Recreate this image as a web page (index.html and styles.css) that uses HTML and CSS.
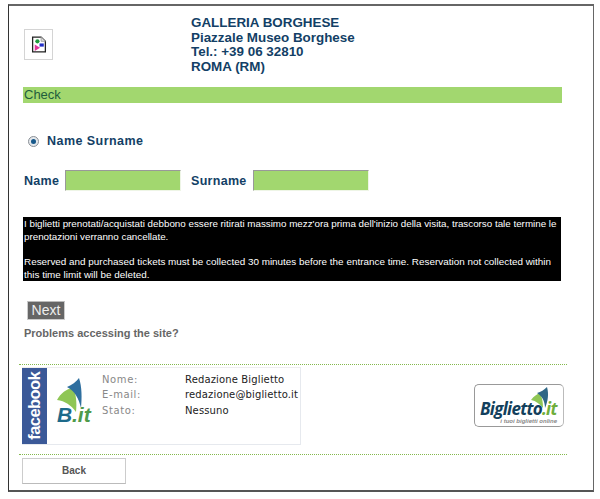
FILE: index.html
```html
<!DOCTYPE html>
<html lang="it">
<head>
<meta charset="utf-8">
<title>Galleria Borghese</title>
<link rel="stylesheet" href="styles.css">
</head>
<body>
<div class="frame">
  <header class="head">
    <div class="thumb">
      <svg width="16" height="17" viewBox="0 0 14 16">
        <path d="M1 1h8l4 4v10H1z" fill="#fff" stroke="#222" stroke-width="1.2"/>
        <path d="M9 1v4h4" fill="#ddd" stroke="#999" stroke-width=".8"/>
        <circle cx="5.5" cy="5" r="2" fill="#1f9a3c"/>
        <path d="M3 8l5 3-5 3z" fill="#e0359b"/>
        <path d="M7.500 7h4v3h-4z" fill="#2430c8"/>
      </svg>
    </div>
    <address class="venue">GALLERIA BORGHESE<br>Piazzale Museo Borghese<br>Tel.: +39 06 32810<br>ROMA (RM)</address>
  </header>
  <div class="bar">Check</div>
  <label class="choice">
    <span class="radio"><span class="dot"></span></span>
    <span>Name Surname</span>
  </label>
  <div class="fields">
    <span class="lab">Name</span><span class="inp"></span>
    <span class="lab lab2">Surname</span><span class="inp"></span>
  </div>
  <div class="notice">
    <p class="it">I biglietti prenotati/acquistati debbono essere ritirati massimo mezz'ora prima dell'inizio della visita, trascorso tale termine le prenotazioni verranno cancellate.</p>
    <p class="en">Reserved and purchased tickets must be collected 30 minutes before the entrance time. Reservation not collected within this time limit will be deleted.</p>
  </div>
  <div class="next">Next</div>
  <div class="problems">Problems accessing the site?</div>
  <div class="social">
    <div class="fb">
      <div class="fb-side"><span>facebook</span></div>
      <svg class="bit" width="38" height="46" viewBox="0 0 38 46">
        <path d="M0 22C4 15 9 11 16 10c3 6 4 14 3 24C14 27 8 23 0 22z" fill="#8fc655"/>
        <path d="M10 9C15 7 19 4 22 0c3 9 3 20 2 30C22 21 18 13 10 9z" fill="#2f6f9f"/>
        <text x="0" y="44" class="bit-b">B</text><text x="15" y="44" class="bit-it">.it</text>
      </svg>
      <dl class="info">
        <dt>Nome:</dt><dd>Redazione Biglietto</dd>
        <dt>E-mail:</dt><dd>redazione@biglietto.it</dd>
        <dt>Stato:</dt><dd>Nessuno</dd>
      </dl>
    </div>
    <div class="brand">
      <svg class="brand-mark" width="18" height="21" viewBox="0 0 18 21">
        <path d="M0 13C3 9 6 7 9 6c2 4 3 9 3 15C9 17 5 14 0 13z" fill="#8fc655"/>
        <path d="M6 6c4-1 7-3 10-6 2 7 1 14-2 21C14 14 11 9 6 6z" fill="#2f6786"/>
      </svg>
      <div class="brand-name">Biglietto<span>.it</span></div>
      <div class="brand-sub">i tuoi biglietti online</div>
    </div>
  </div>
  <div class="foot"><div class="back">Back</div></div>
</div>
</body>
</html>
```
FILE: styles.css
```css
* { box-sizing: border-box; }
html, body { margin: 0; background: #fff; }
body { padding: 4px 0 0 8px; font-family: "Liberation Sans", Arial, sans-serif; }
.frame {
  width: 586px; height: 488px;
  border: 1px solid #333; border-top: 2px solid #666; border-right-color: #666; border-bottom: 2px solid #555;
  padding: 0 26px 0 14px;
}
.head { display: flex; height: 81px; padding: 10px 0 0 1px; }
.thumb {
  width: 29px; height: 31px; margin-top: 13px; border: 1px solid #d4d4d4;
  display: flex; align-items: center; justify-content: center;
}
.venue {
  margin-left: 138px; font-style: normal; font-weight: bold; font-size: 13.4px;
  line-height: 14.7px; color: #133f66;
}
.bar {
  width: 539px; height: 16px; background: #a2d76f; color: #1f5c3c;
  font-size: 13px; line-height: 16px; padding-left: 1px;
}
.choice {
  display: flex; align-items: center; gap: 8px; margin: 30px 0 0 5px;
  font-size: 12.5px; line-height: 16px; font-weight: bold; color: #133f66; letter-spacing: .45px;
}
.radio {
  width: 11px; height: 11px; border-radius: 50%; border: 1px solid #8a8f96; background: #e4e8ec;
  display: flex; align-items: center; justify-content: center;
}
.dot { width: 5px; height: 5px; border-radius: 50%; background: #17588a; }
.fields {
  display: flex; align-items: center; height: 21px; margin: 21px 0 0 1px;
  font-size: 12.5px; font-weight: bold; color: #133f66; letter-spacing: .3px;
}
.lab { width: 41px; }
.lab2 { width: 62px; margin-left: 10px; }
.inp {
  width: 116px; height: 21px; background: #a2d76f;
  border: 1px solid #eef5e6; border-top: 1px solid #999; border-left: 1px solid #999;
}
.notice {
  width: 538px; height: 64px; margin-top: 26px; padding: 1px 1px 0;
  background: #000; color: #fff; line-height: 12.8px;
}
.notice p { margin: 0 0 12.8px; }
.it { font-size: 9.8px; }
.en { font-size: 9.9px; letter-spacing: .01px; }
.next {
  width: 38px; height: 19px; margin: 20px 0 0 4px;
  background: #666; border: 1px solid #ccc; border-top-color: #bbb;
  color: #eee; font-size: 14px; line-height: 17px; text-align: center;
}
.problems { margin: 6px 0 0 1px; font-size: 11px; line-height: 15px; font-weight: bold; color: #666; }
.social {
  display: flex; justify-content: space-between; align-items: flex-start;
  width: 548px; height: 91px; margin: 23px 0 0 -4px; padding-top: 2px;
  border-top: 1px dotted #84b84c; border-bottom: 1px dotted #84b84c;
}
.fb {
  display: flex; width: 279px; height: 78px; margin-left: 3px;
  border: 1px solid #e6e9ee; border-left: 0; border-top-color: #eee;
}
.fb-side {
  width: 25px; background: #3b5998; color: #fff; display: flex; align-items: center; justify-content: center;
}
.fb-side span {
  writing-mode: vertical-rl; transform: rotate(180deg);
  font-size: 16.5px; font-weight: bold; line-height: 25px; letter-spacing: -.6px;
}
.bit { margin: 10px 0 0 10px; flex: none; overflow: visible; }
.bit-b { font: italic bold 21px "Liberation Sans", sans-serif; fill: #1d6a8a; }
.bit-it { font: italic bold 21px "Liberation Sans", sans-serif; fill: #4f9a4a; }
.info {
  display: grid; grid-template-columns: 83px auto; grid-auto-rows: 15.4px;
  margin: 4px 0 0 7px; font: 10px/15px "DejaVu Sans", Verdana, sans-serif; letter-spacing: .14px;
}
.info dt { color: #888; letter-spacing: .6px; }
.info dd { margin: 0; color: #222; white-space: nowrap; }
.brand {
  position: relative; width: 90px; height: 43px; margin: 17px 3px 0 0;
  border: 1px solid #999; border-right-color: #bbb; border-radius: 5px; text-align: center;
}
.brand-mark { position: absolute; right: 14px; top: 2px; }
.brand-name {
  position: absolute; left: 5px; top: 16px;
  font: italic bold 17px/15px "Open Sans", "Liberation Sans", sans-serif; color: #123f5c; letter-spacing: -.7px;
}
.brand-name span { color: #6fae3c; }
.brand-sub {
  position: absolute; right: 6px; top: 33px; font: italic bold 6px/7px "Liberation Sans", sans-serif; color: #888;
}
.back {
  width: 104px; height: 26px; margin: 3px 0 0 -1px; border: 1px solid #ccc; border-bottom-color: #bbb;
  color: #555; font-size: 10px; line-height: 24px; font-weight: bold; text-align: center;
}
```
